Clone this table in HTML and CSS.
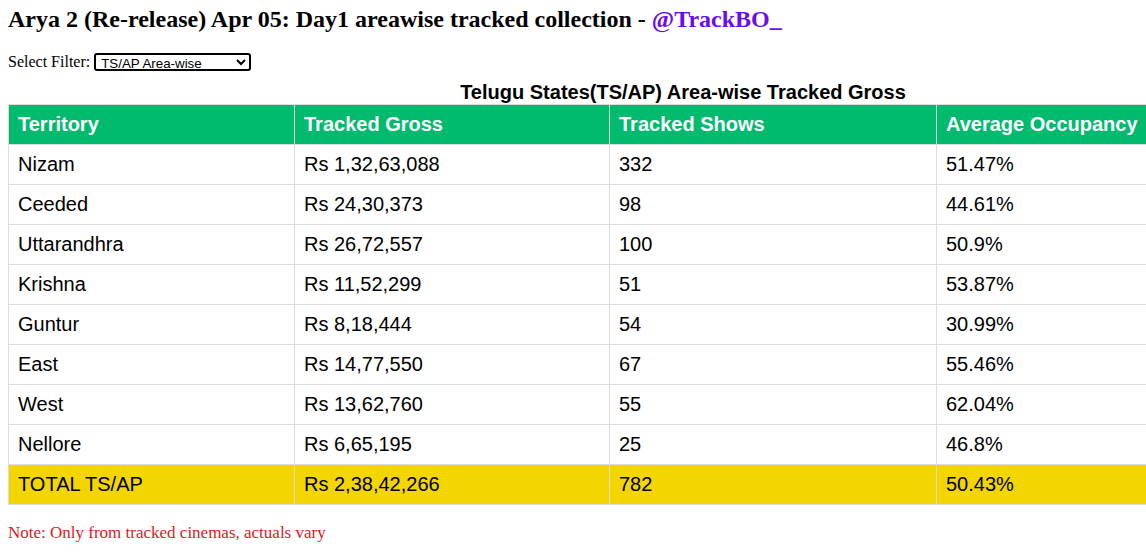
FILE: index.html
```html
<!DOCTYPE html>
<html>
<head>
<meta charset="utf-8">
<link rel="stylesheet" href="styles.css">
</head>
<body>
<div class="page">
<h2 class="title">Arya 2 (Re-release) Apr 05: Day1 areawise tracked collection - <span class="handle">@TrackBO_</span></h2>
<div class="filter">
<label for="f">Select Filter:</label>
<select id="f" class="filter-select"><option>TS/AP Area-wise</option></select>
</div>
<table class="gross">
<caption>Telugu States(TS/AP) Area-wise Tracked Gross</caption>
<colgroup><col class="c1"><col class="c2"><col class="c3"><col class="c4"></colgroup>
<thead>
<tr><th>Territory</th><th>Tracked Gross</th><th>Tracked Shows</th><th>Average Occupancy</th></tr>
</thead>
<tbody>
<tr><td>Nizam</td><td>Rs 1,32,63,088</td><td>332</td><td>51.47%</td></tr>
<tr><td>Ceeded</td><td>Rs 24,30,373</td><td>98</td><td>44.61%</td></tr>
<tr><td>Uttarandhra</td><td>Rs 26,72,557</td><td>100</td><td>50.9%</td></tr>
<tr><td>Krishna</td><td>Rs 11,52,299</td><td>51</td><td>53.87%</td></tr>
<tr><td>Guntur</td><td>Rs 8,18,444</td><td>54</td><td>30.99%</td></tr>
<tr><td>East</td><td>Rs 14,77,550</td><td>67</td><td>55.46%</td></tr>
<tr><td>West</td><td>Rs 13,62,760</td><td>55</td><td>62.04%</td></tr>
<tr><td>Nellore</td><td>Rs 6,65,195</td><td>25</td><td>46.8%</td></tr>
<tr class="total"><td>TOTAL TS/AP</td><td>Rs 2,38,42,266</td><td>782</td><td>50.43%</td></tr>
</tbody>
</table>
<p class="note">Note: Only from tracked cinemas, actuals vary</p>
</div>
</body>
</html>
```

FILE: styles.css
```css
html, body {
  background: #fff;
}
body {
  margin: 0 0 0 8px;
  font-family: "Liberation Serif", "Times New Roman", serif;
  color: #000;
}
.page {
  overflow: hidden;
  padding-top: 5px;
}
.title {
  margin: 0 0 18px 0;
  font-size: 24px;
  font-weight: bold;
  line-height: 28px;
}
.handle {
  color: #6a0dea;
}
.filter {
  font-size: 16px;
  display: flex;
  align-items: center;
  gap: 4px;
  height: 22px;
}
.filter-select {
  font-family: "Liberation Sans", Arial, sans-serif;
  font-size: 13.33px;
  width: 157px;
  height: 18px;
  border: 2px solid #000;
  border-radius: 3px;
  background: #fff;
  color: #000;
  padding: 0 1px;
}
.gross {
  margin-top: 8px;
  width: 1350px;
  border-collapse: collapse;
  font-family: "Liberation Sans", Arial, sans-serif;
  font-size: 20px;
}
.gross caption {
  font-weight: bold;
  font-size: 20px;
  line-height: 23px;
  padding-bottom: 0;
}
.c1 { width: 286px; }
.c2 { width: 315px; }
.c3 { width: 327px; }
.gross th, .gross td {
  border: 1px solid #ddd;
  padding: 8px 9px;
  text-align: left;
  line-height: 23px;
}
.gross th {
  background: #00ba6e;
  color: #fff;
  font-weight: bold;
}
.gross .total td {
  background: #f3d500;
}
.note {
  margin: 18px 0 0 0;
  color: #e0161e;
  font-size: 17px;
  line-height: 20px;
}
```
